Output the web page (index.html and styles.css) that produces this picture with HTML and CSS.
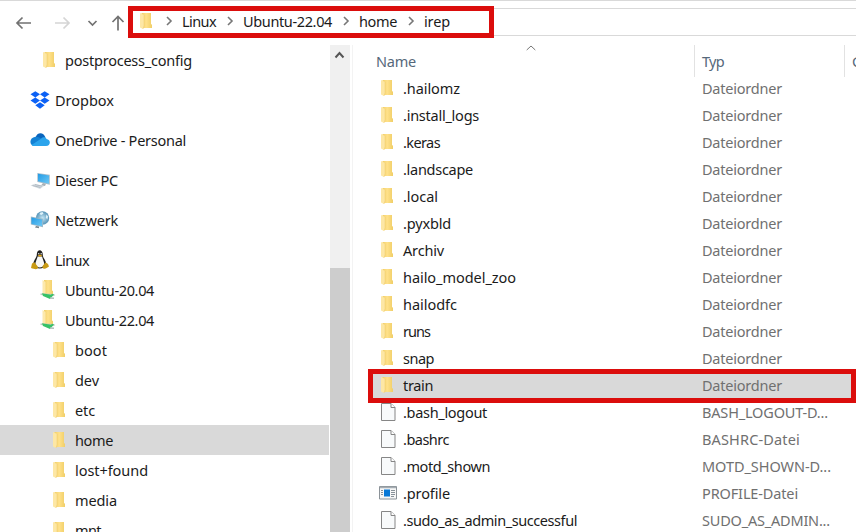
FILE: index.html
```html
<!DOCTYPE html>
<html lang="de">
<head>
<meta charset="utf-8">
<title>irep</title>
<link rel="stylesheet" href="styles.css">
</head>
<body>
<svg class="defs" aria-hidden="true">
  <defs>
    <linearGradient id="fold" x1="0" x2="1"><stop offset="0" stop-color="#f1ce67"/><stop offset=".45" stop-color="#ffe18a"/><stop offset="1" stop-color="#f0ce67"/></linearGradient>
    <linearGradient id="screen" x1="0" x2="1" y2="1"><stop offset="0" stop-color="#239be5"/><stop offset="1" stop-color="#6dc8f5"/></linearGradient>
    <radialGradient id="globe"><stop offset="0" stop-color="#c5e6f4"/><stop offset="1" stop-color="#5593b7"/></radialGradient>
    <symbol id="folder" viewBox="0 0 20 20"><path d="M4.500 2h9.500v11l1 .8V17H6.500l-2-1z" fill="url(#fold)"/><path d="M3 2l4 2v11l-1 3-3-1.500z" fill="#fde7a5"/><path d="M7 4v11l-1 3" fill="none" stroke="#efcb6f" stroke-width=".5"/></symbol>
    <symbol id="dropbox" viewBox="0 0 20 20"><path d="M5.300 1.200L10 4.300 5.300 7.400.5 4.300zM14.700 1.200l4.800 3.100-4.800 3.100L10 4.300zM5.300 7.600l4.700 3-4.700 3.100-4.800-3.100zM14.700 7.600l4.800 3-4.800 3.100-4.700-3.100zM10 12.200l4.700 3.100-4.700 3.400-4.700-3.400z" fill="#0c61f5"/></symbol>
    <symbol id="cloud" viewBox="0 0 20 20"><path d="M5.500 7.500C7 2 13.500 1.600 15.500 7.500L10 12z" fill="#0a65bd"/><path d="M4 16C-1 15-1 7.500 5.500 6.700c2-.2 4 .8 6 2L5 16z" fill="#1381d4"/><path d="M11 8.700c2-2 5-1.700 5.500.3 4.500.5 4.500 7-.5 7H4c-1 0-2-.5-2.500-1z" fill="#2ba4ec"/></symbol>
    <symbol id="pc" viewBox="0 0 20 20"><path d="M7.300 3l12.500 1.700v10L7.300 12z" fill="#a9bdca"/><path d="M8 3.800l11 1.600v8.300L8 11.300z" fill="url(#screen)"/><path d="M13 13l3 .7-1 2.300-4-.5z" fill="#a9b2b8"/><path d="M.5 15.500l4.300-1.800 9.200 2.200-4 3z" fill="#d6dde2"/><path d="M2.500 15.500l8 2M5 14.600l7 1.600" stroke="#97a3ad" stroke-width=".6"/></symbol>
    <symbol id="network" viewBox="0 0 20 20"><circle cx="12.500" cy="8" r="6.700" fill="url(#globe)"/><path d="M10 2.800l2.500-.7 1 1.500-2 1.500-2-.8zM16.500 4.500l1.500 2-.7 3-1.500-2z" fill="#dff2fa"/><path d="M.8 6.500l12.200 2.200v8.600L.8 14.500z" fill="#9fb9c8"/><path d="M1.500 7.500l10.700 2v6.800L1.500 14z" fill="url(#screen)"/><path d="M6 16l3 .5v1.700l-4-.6z" fill="#78858c"/></symbol>
    <symbol id="tux" viewBox="0 0 20 20"><path d="M6.800 5C6.500-1.500 13-1.500 12.800 5c0 3 3.700 5.500 3.500 10-2 4.500-11 4.500-13 0-.3-4.500 3.300-7 3.500-10z" fill="#20201f"/><path d="M7.600 6.500h4.500c.5 3 2.200 5 2.200 8-1.500 4-7.500 4-9 0 0-3 1.800-5 2.300-8z" fill="#f7f7f5"/><circle cx="8.700" cy="3.800" r=".8" fill="#ddd"/><circle cx="11.200" cy="3.800" r=".8" fill="#ddd"/><path d="M7.700 5.300L10 4.400l2.300 1L10 7z" fill="#dda51b"/><path d="M2 13.500l2.500-1.200L8 17c0 3-3 2.500-7 1zM18 14l-2.500-1.700-3 4c-.5 3 2 3.500 6.500.2z" fill="#c89a14"/></symbol>
    <symbol id="netfolder" viewBox="0 0 20 20"><path d="M4 0h8v10.500l1 .5v3H4z" fill="url(#fold)"/><path d="M2.500 0l3 2v12h-3z" fill="#fde9ad"/><path d="M.5 13.500l14 .5v2l-14-1z" fill="#bdc8c4"/><path d="M2 13.200l9 1.500 1-1 2 .8-4 4.500-7-3z" fill="#38c268"/><path d="M10 18l4 .3" stroke="#b0bebb" stroke-width="1.500"/></symbol>
    <symbol id="file" viewBox="0 0 20 20"><path d="M3.500 1.500H13l4 4v13H3.500z" fill="#f8fafb" stroke="#868686"/><path d="M13 1.500v4h4" fill="#fff" stroke="#868686"/></symbol>
    <symbol id="app" viewBox="0 0 20 20"><path d="M1.500 3.500h17v12.500h-17z" fill="#f7f7f7" stroke="#8b9298"/><path d="M2 4.500h16" stroke="#a5acb2" stroke-width="1.500"/><path d="M6 6.500h6v7H6z" fill="#0878d7"/><path d="M3 7.500h2m-2 2h2m-2 2h2m8-4h4m-4 2h4m-4 2h4m-4 2h3" stroke="#7a858d" stroke-width=".9"/></symbol>
    <symbol id="chev" viewBox="0 0 8 10"><path d="M2 1L6 5 2 9" fill="none" stroke="#777" stroke-width="1.600"/></symbol>
  </defs>
</svg>
<div class="window">
  <header class="toolbar">
    <svg class="history" viewBox="0 0 128 44">
      <path d="M31 23H17.500M22.500 17.500L17 23l5.500 5.500" stroke="#727272"/>
      <path d="M55 23h13.500M63.500 17.500L69 23l-5.500 5.500" stroke="#d5d5d5"/>
      <path d="M88.500 21l4 4 4-4" stroke="#727272"/>
      <path d="M118 30.500V17M112.500 22l5.500-5.500 5.500 5.500" stroke="#727272"/>
    </svg>
    <nav class="address" id="crumbs"></nav>
    <div class="highlight path-highlight"></div>
  </header>
  <main class="content">
    <aside class="tree" id="tree"></aside>
    <div class="scrollbar">
      <svg class="scroll-up" viewBox="0 0 20 20"><path d="M5.500 12.500L9.500 8l4 4.500" fill="none" stroke="#555" stroke-width="2"/></svg>
      <div class="thumb"></div>
    </div>
    <section class="list">
      <div class="columns">
        <span class="col-name"><span data-width="40">Name</span></span>
        <svg class="sort" viewBox="0 0 10 6"><path d="M.7 5L5 1l4.300 4" fill="none" stroke="#777"/></svg>
        <span class="col-type"><span data-width="22">Typ</span></span>
        <span class="col-size">Größe</span>
      </div>
      <div id="files"></div>
      <div class="highlight row-highlight"></div>
    </section>
  </main>
</div>
<script src="app.js"></script>
</body>
</html>
```
FILE: styles.css
```css
* { box-sizing: border-box; }
body { margin: 0; overflow: hidden; background: #fff; color: #1b1b1b; font: 14.5px/20px "Noto Sans", "Open Sans", sans-serif; }
.defs { position: absolute; width: 0; height: 0; }
.window { width: 856px; height: 532px; overflow: hidden; display: flex; flex-direction: column; }
.toolbar { position: relative; display: flex; height: 45px; flex: none; border-top: 1px solid #d9d9d9; }
.history { width: 128px; height: 44px; margin-top: -1px; flex: none; fill: none; stroke-width: 1.7; }
.address { display: flex; flex: 1; align-items: center; height: 28px; margin-top: 7px; padding: 0 0 2px 8px; border: 1px solid #d9d9d9; border-right: 0; }
.icon { width: 20px; height: 20px; flex: none; }
.label { white-space: nowrap; }
.address .chev { width: 8px; height: 10px; flex: none; }
.address .crumb { display: flex; align-items: center; flex: none; }
.address .chev { margin-right: 9px; }
.address .label { margin-right: 10px; }
.address .icon { margin-right: 8px; }
.highlight { position: absolute; border: 5px solid #db0d0c; pointer-events: none; }
.path-highlight { left: 128px; top: 5px; width: 366px; height: 32px; }
.content { display: flex; flex: 1; min-height: 0; }
.tree { width: 330px; flex: none; overflow: hidden; }
.node { display: flex; align-items: center; width: 329px; height: 30px; }
.node .icon { margin-right: 5px; }
.node.root { margin-top: 10px; padding-left: 30px; }
.node.first { padding-left: 40px; }
.node.distro { padding-left: 40px; }
.node.child { padding-left: 50px; }
.node.selected { background: #d9d9d9; }
.scrollbar { width: 20px; flex: none; display: flex; flex-direction: column; background: #f0f0f0; }
.scroll-up { width: 20px; height: 20px; margin-bottom: 203px; flex: none; }
.thumb { flex: 1; background: #cdcdcd; }
.list { position: relative; flex: 1; min-width: 0; margin-left: 2px; border-left: 1px solid #f3f3f3; padding-left: 15px; overflow: hidden; }
.columns { display: flex; align-items: flex-start; height: 29px; color: #56687a; }
.col-name { width: 158px; flex: none; padding: 6px 0 0 8px; }
.sort { width: 10px; height: 6px; margin-right: 158px; flex: none; }
.col-type, .col-size { height: 32px; padding: 6px 0 0 7px; border-left: 1px solid #e2e2e2; flex: none; }
.col-type { width: 150px; }
.file { display: flex; align-items: center; height: 27px; width: 488px; }
.file .icon { margin: 0 5px 0 10px; }
.file .name { width: 299px; }
.file .type { color: #707070; }

/* The selection fills the frame down to its lower edge. */
.file.selected { background: #d9d9d9; box-shadow: 0 2px #d9d9d9; }
.file.selected + .file { position: relative; }
.row-highlight { left: 15px; top: 324px; width: 488px; height: 34px; }
```
FILE: app.js
```js
const icon = (name, cls = "icon") => `<svg class="${cls}"><use href="#${name}"/></svg>`;
const label = (text, width) => `<span class="label" data-width="${width}">${text}</span>`;

const crumbs = [["Linux", 34], ["Ubuntu-22.04", 89], ["home", 38], ["irep", 26]];
document.getElementById("crumbs").innerHTML = icon("folder") +
  crumbs.map(([t, w]) => `<span class="crumb">${icon("chev", "chev")}${label(t, w)}</span>`).join("");

const nodes = [
  ["first", "folder", "postprocess_config", 127],
  ["root", "dropbox", "Dropbox", 59],
  ["root", "cloud", "OneDrive - Personal", 131],
  ["root", "pc", "Dieser PC", 63],
  ["root", "network", "Netzwerk", 63],
  ["root", "tux", "Linux", 34],
  ["distro", "netfolder", "Ubuntu-20.04", 89],
  ["distro", "netfolder", "Ubuntu-22.04", 89],
  ["child", "folder", "boot", 32],
  ["child", "folder", "dev", 24],
  ["child", "folder", "etc", 20],
  ["child selected", "folder", "home", 38],
  ["child", "folder", "lost+found", 73],
  ["child", "folder", "media", 42],
  ["child", "folder", "mnt", 26]
];
document.getElementById("tree").innerHTML =
  nodes.map(([c, i, t, w]) => `<div class="node ${c}">${icon(i)}${label(t, w)}</div>`).join("");

const files = [
  [".hailomz", 57], [".install_logs", 76], [".keras", 37], [".landscape", 70],
  [".local", 35], [".pyxbld", 48], ["Archiv", 41], ["hailo_model_zoo", 113],
  ["hailodfc", 54], ["runs", 27], ["snap", 31], ["train", 30],
  [".bash_logout", 84, "file", "BASH_LOGOUT-D...", 126],
  [".bashrc", 46, "file", "BASHRC-Datei", 98],
  [".motd_shown", 87, "file", "MOTD_SHOWN-D...", 129],
  [".profile", 47, "app", "PROFILE-Datei", 96],
  [".sudo_as_admin_successful", 174, "file", "SUDO_AS_ADMIN...", 128]
];
document.getElementById("files").innerHTML = files.map(
  ([t, w, i = "folder", type = "Dateiordner", tw = 80]) =>
    `<div class="file${t === "train" ? " selected" : ""}">${icon(i)}<span class="name">${label(t, w)}</span><span class="type">${label(type, tw)}</span></div>`
).join("");

// Tracks each label so that it fills its nominal width.
document.querySelectorAll("[data-width]").forEach(el => {
  const natural = el.getBoundingClientRect().width;
  el.style.letterSpacing = (el.dataset.width - natural) / el.textContent.length + "px";
});
```
